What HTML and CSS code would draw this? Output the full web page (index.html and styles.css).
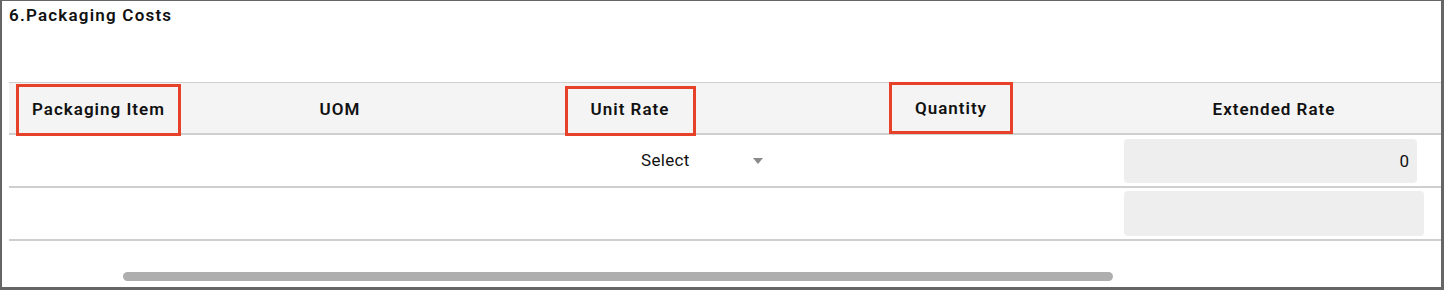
FILE: index.html
```html
<!DOCTYPE html>
<html>
<head>
<meta charset="utf-8">
<link rel="stylesheet" href="styles.css">
</head>
<body>
<div class="frame">
  <div class="title">6.Packaging Costs</div>
  <div class="table">
    <div class="row head">
      <div class="cell c1 left"><span class="mark mark-item">Packaging Item</span></div>
      <div class="cell c2">UOM</div>
      <div class="cell c3"><span class="mark mark-rate">Unit Rate</span></div>
      <div class="cell c4"><span class="mark mark-qty">Quantity</span></div>
      <div class="cell c5">Extended Rate</div>
      <div class="cell c6"></div>
    </div>
    <div class="row body">
      <div class="cell c1"></div>
      <div class="cell c2"></div>
      <div class="cell c3 sel-cell">
        <div class="select"><span class="sel-text">Select</span><span class="caret"></span></div>
      </div>
      <div class="cell c4"></div>
      <div class="cell c5 in-cell"><div class="input input-a">0</div></div>
      <div class="cell c6"></div>
    </div>
    <div class="row body">
      <div class="cell c1"></div>
      <div class="cell c2"></div>
      <div class="cell c3"></div>
      <div class="cell c4"></div>
      <div class="cell c5 in-cell"><div class="input input-b"></div></div>
      <div class="cell c6"></div>
    </div>
  </div>
  <div class="scroll"><div class="thumb"></div></div>
</div>
</body>
</html>
```
FILE: styles.css
```css
html, body {
  margin: 0;
  padding: 0;
  background: #fff;
}
body {
  font-family: Roboto, "Liberation Sans", sans-serif;
  color: #111;
}
.frame {
  box-sizing: border-box;
  width: 1444px;
  height: 290px;
  border-style: solid;
  border-color: #666;
  border-width: 1px 3px 3px 2px;
  padding: 0 0 0 7px;
  overflow: hidden;
}
.title {
  font-size: 17px;
  font-weight: 600;
  line-height: 20px;
  margin-top: 4px;
  height: 77px;
  letter-spacing: 1.2px;
}
.table {
  width: 1432px;
}
.row {
  display: grid;
  grid-template-columns: 196px 270px 310px 332px 314px 1fr;
}
.head {
  box-sizing: border-box;
  background: #f4f4f4;
  border-top: 1px solid #cfcfcf;
  border-bottom: 2px solid #cfcfcf;
  height: 53px;
  font-size: 17px;
  font-weight: 600;
  letter-spacing: 1px;
}
.body {
  height: 51px;
  border-bottom: 2px solid #cfcfcf;
}
.cell {
  height: 100%;
  display: flex;
  align-items: center;
  justify-content: center;
}
.head .cell {
  padding-bottom: 1px;
  box-sizing: border-box;
}
.head .cell.c1,
.head .cell.c3,
.head .cell.c4 {
  align-items: flex-start;
  padding-bottom: 0;
}
.cell.left {
  justify-content: flex-start;
}
.mark {
  box-sizing: border-box;
  border: 3px solid #e8412a;
  display: flex;
  align-items: center;
  justify-content: center;
  position: relative;
  z-index: 1;
}
.mark-item {
  margin-left: 7px;
  margin-top: 1px;
  width: 165px;
  height: 52px;
  padding-bottom: 3px;
}
.mark-rate {
  margin-top: 3px;
  width: 131px;
  height: 50px;
  padding-bottom: 5px;
}
.mark-qty {
  margin-top: -1px;
  width: 124px;
  height: 52px;
  padding-bottom: 1px;
}
.sel-cell {
  justify-content: flex-start;
}
.select {
  display: flex;
  align-items: center;
  margin-left: 166px;
  font-size: 17px;
  font-weight: 400;
  letter-spacing: 0.3px;
  color: #111;
  margin-bottom: 1px;
}
.caret {
  width: 0;
  height: 0;
  border-left: 5px solid transparent;
  border-right: 5px solid transparent;
  border-top: 6px solid #8a8a8a;
  margin-left: 63px;
  margin-top: 2px;
}
.in-cell {
  justify-content: flex-start;
}
.input {
  box-sizing: border-box;
  background: #eeeeee;
  border-radius: 4px;
  margin-left: 7px;
  font-size: 17px;
  padding-right: 8px;
  display: flex;
  align-items: center;
  justify-content: flex-end;
}
.input-a {
  width: 293px;
  height: 44px;
}
.input-b {
  width: 300px;
  height: 45px;
}
.scroll {
  margin-top: 31px;
  height: 9px;
}
.thumb {
  margin-left: 114px;
  width: 990px;
  height: 9px;
  background: #aeaeae;
  border-radius: 5px;
}
```
